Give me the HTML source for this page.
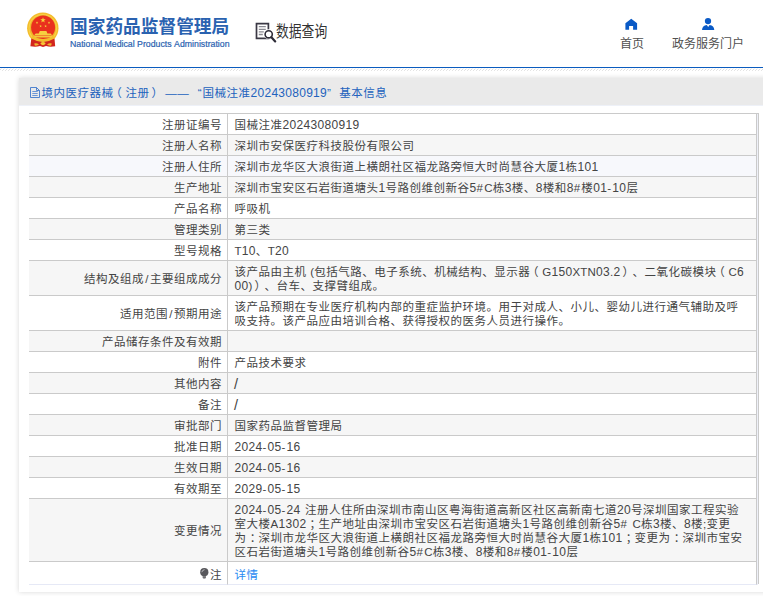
<!DOCTYPE html>
<html lang="zh-CN">
<head>
<meta charset="utf-8">
<title>国家药品监督管理局 数据查询</title>
<style>
*{box-sizing:border-box;margin:0;padding:0}
html,body{width:763px;height:596px;overflow:hidden;background:#fff}
body{font-family:"Liberation Sans","Noto Sans CJK SC",sans-serif;font-size:12px;text-spacing-trim:space-all;font-kerning:none;color:#333;position:relative}
.hdr{position:absolute;left:0;top:0;width:763px;height:66px;background:#fff}
.bline{position:absolute;left:0;top:67px;width:763px;height:1px;background:#0b5cbf}
.hatch{position:absolute;left:0;top:68px;width:763px;height:3px;background:repeating-linear-gradient(90deg,#fff 0,#fff 1px,#f4f4f4 1px,#f4f4f4 2px,#fff 2px,#fff 3px) 0 0/100% 1px no-repeat,repeating-linear-gradient(90deg,#e0e0e0 0,#e0e0e0 1px,#fff 1px,#fff 3px) 0 1px/100% 1px no-repeat,repeating-linear-gradient(90deg,#fff 0,#fff 2px,#e4e4e4 2px,#e4e4e4 3px) 0 2px/100% 1px no-repeat}
.emblem{position:absolute;left:22px;top:8px;width:42px;height:44px}
.t1{position:absolute;left:70px;top:15px;font-size:17.7px;font-weight:bold;color:#2a62b0;line-height:24px;white-space:nowrap}
.t2{position:absolute;left:70px;top:38px;-webkit-text-stroke:.2px #2a62b0;font-size:8.75px;color:#2a62b0;line-height:12px;white-space:nowrap}
.q{position:absolute;left:276px;top:21px;font-size:16px;line-height:22px;color:#333;white-space:nowrap;transform:scaleX(.8);transform-origin:0 0}
.qi{position:absolute;left:252px;top:18px;width:28px;height:28px}
.nav{position:absolute;top:35px;font-size:12px;line-height:18px;color:#505050;white-space:nowrap}
.ni{position:absolute}
.panel{position:absolute;left:19px;top:78px;width:760px;height:514px;background:#fff;box-shadow:0 0 5px rgba(0,0,0,.16)}
.ph{position:absolute;left:0;top:0;width:100%;height:28px;background:#eaeaea;border-bottom:1px solid #eef1f8;color:#2262bd;font-size:11.5px;letter-spacing:.5px;line-height:14px;padding:8px 0 0 22.5px;white-space:nowrap}
.ph svg{position:absolute;left:11px;top:9px;width:10px;height:11px}
.a{letter-spacing:.2px}
.d{font-size:12px;letter-spacing:.33px}
.h{letter-spacing:1.2px}
.e2{font-size:12px;letter-spacing:.28px}
.ql{margin:0 .4px 0 8.6px}
.qr{margin:0 7.9px 0 0}
.pl{position:relative;left:-3.3px}
.pr{position:relative;left:2px}
.pc{position:relative;left:3.2px}
.sl{padding:0 1.1px}
.bs{font-size:14.5px;line-height:10px;position:relative;top:.5px;left:-.5px}
.fw{font-family:"Noto Sans CJK SC",sans-serif}
table{position:absolute;left:10px;top:35px;width:728px;border-collapse:separate;border-spacing:0;border-top:1px solid #cacaca;table-layout:fixed}
.rb{position:absolute;left:739px;top:35px;width:1px;height:471px;background:#cacaca}
.rt{position:absolute;left:738px;top:35px;width:2px;height:1px;background:#cacaca}
.rg{position:absolute;left:738px;top:36px;width:1px;height:471px;background:#eef0f8}
td{border-bottom:1px solid #cacaca;border-right:1px solid #cacaca;font-size:11.5px;letter-spacing:.5px;line-height:14px;height:21px;padding:4px 8px 2px 6.5px;vertical-align:middle;color:#444;word-break:break-all}
td.l{width:199px;text-align:right;padding:4px 5px 2px 2px}
td.l2{padding-top:3px}
tr.g td{background:#f6f6f6}
tr.hv td{background:#f7f8fc}
a{color:#2b8cf2;text-decoration:none}
tr.last td{height:23px;border-bottom-color:#e6e9f6;padding-top:6px;padding-bottom:2px}
.bulb{display:inline-block;width:9px;height:11px;vertical-align:-.3px;margin-right:1.500px}
</style>
</head>
<body>
<div class="hdr">
<svg class="emblem" viewBox="22 8 42 44">
<circle cx="42.800" cy="28.200" r="15.700" fill="#f4bd2c"/>
<circle cx="42.800" cy="28.200" r="14.200" fill="#f7d24a"/>
<circle cx="42.800" cy="28.200" r="13.200" fill="#f1b62a"/>
<circle cx="43.100" cy="27.600" r="12" fill="#e9301e"/>
<polygon points="43.00,17.30 43.68,19.26 45.76,19.30 44.10,20.56 44.70,22.55 43.00,21.36 41.30,22.55 41.90,20.56 40.24,19.30 42.32,19.26" fill="#f8d63c"/><polygon points="37.00,21.30 37.33,22.25 38.33,22.27 37.53,22.87 37.82,23.83 37.00,23.26 36.18,23.83 36.47,22.87 35.67,22.27 36.67,22.25" fill="#f8d63c"/><polygon points="49.00,21.30 49.33,22.25 50.33,22.27 49.53,22.87 49.82,23.83 49.00,23.26 48.18,23.83 48.47,22.87 47.67,22.27 48.67,22.25" fill="#f8d63c"/><polygon points="40.60,24.70 40.93,25.65 41.93,25.67 41.13,26.27 41.42,27.23 40.60,26.66 39.78,27.23 40.07,26.27 39.27,25.67 40.27,25.65" fill="#f8d63c"/><polygon points="45.60,24.70 45.93,25.65 46.93,25.67 46.13,26.27 46.42,27.23 45.60,26.66 44.78,27.23 45.07,26.27 44.27,25.67 45.27,25.65" fill="#f8d63c"/>
<path d="M38.800 33.400L39.800 31h6.600l1 2.400h3.200l1.500 1.800v2.200H34.200v-2.200l1.500-1.800z" fill="#f6cf40"/>
<path d="M32.200 36.200Q43 41.800 54 36.200L54.600 38.400Q43 44.600 31.600 38.400Z" fill="#f3bd2c"/>
<path d="M31.300 38.600Q43 45.400 54.500 38.600L55.200 46.200Q50 47.300 46 45.900L43 46.900L40 45.900Q36 47.300 30.400 46.200Z" fill="#d2261c"/>
<path d="M40.300 43.200Q43 40.800 45.700 43.200Q44.600 45.300 43 45.300Q41.400 45.300 40.300 43.200Z" fill="#f5c535"/>
<path d="M34.200 43.600Q36.500 42.600 39 44.600Q37 46.200 34.800 45.600ZM51.800 43.600Q49.500 42.600 47 44.600Q49 46.200 51.200 45.600Z" fill="#f0b830"/>
<path d="M34.400 35.600h17.300" stroke="#e9301e" stroke-width=".5"/>
</svg>
<div class="t1">国家药品监督管理局</div>
<div class="t2">National Medical Products Administration</div>
<svg class="qi" viewBox="252 18 28 28"><path d="M256.500 23.600H268.400V38.300H256.500Z" fill="none" stroke="#3a3844" stroke-width="1.700"/><path d="M258.800 26.700h7M258.800 29.300h7M258.800 31.900h5M258.800 34.500h4" stroke="#8a8a92" stroke-width="1.300"/><circle cx="268.700" cy="34.300" r="5" fill="#fff"/><circle cx="268.700" cy="34.300" r="3.600" fill="#fff" stroke="#2e2c38" stroke-width="1.600"/><path d="M271.400 37.200l3.800 4.200" stroke="#2e2c38" stroke-width="2.200" stroke-linecap="round"/></svg>
<div class="q">数据查询</div>
<svg class="ni" style="left:619px;top:14px;width:24px;height:20px" viewBox="619 14 24 20"><path d="M625.400 23.200L631.250 18.800L637.100 23.200V29.800H633.100V25.900H629.100V29.800H625.400Z" fill="#0a5ac6"/></svg>
<div class="nav" style="left:620px">首页</div>
<svg class="ni" style="left:696px;top:14px;width:24px;height:20px" viewBox="696 14 24 20"><circle cx="708" cy="21.100" r="3.150" fill="#0a5ac6"/><path d="M702 30.100Q702.300 25.300 706.800 24.900L708.200 26.900L709.600 24.900Q714 25.300 714.300 30.100Z" fill="#0a5ac6"/></svg>
<div class="nav" style="left:672px">政务服务门户</div>
</div>
<div class="bline"></div>
<div class="hatch"></div>
<div class="panel">
<div class="ph"><svg viewBox="0 0 10 11"><path d="M.5.5h6l3 3v7h-9z" fill="none" stroke="#3f78cc" stroke-width=".9"/><path d="M6.500.500v3h3" fill="none" stroke="#3f78cc" stroke-width=".9"/><path d="M2.300 4.500h5.400M2.300 6.500h5.400M2.300 8.500h5.400" stroke="#5c8cd4" stroke-width=".9"/></svg>境内医疗器械<span class="pl">（</span>注册<span class="pr">）</span> ——<span class="ql">“</span>国械注准<span class="e2">20243080919</span><span class="qr">”</span>基本信息</div>
<table cellspacing="0">
<tr><td class="l">注册证编号</td><td>国械注准<span class="d">20243080919</span></td></tr>
<tr class="g"><td class="l">注册人名称</td><td>深圳市安保医疗科技股份有限公司</td></tr>
<tr class="hv"><td class="l">注册人住所</td><td>深圳市龙华区大浪街道上横朗社区福龙路旁恒大时尚慧谷大厦<span class="d">1</span>栋<span class="d">101</span></td></tr>
<tr class="g"><td class="l">生产地址</td><td>深圳市宝安区石岩街道塘头<span class="d">1</span>号路创维创新谷<span class="d">5</span><span class="h">#</span><span class="a">C</span>栋<span class="d">3</span>楼、<span class="d">8</span>楼和<span class="d">8</span><span class="h">#</span>楼<span class="d">01</span><span class="h">-</span><span class="d">10</span>层</td></tr>
<tr><td class="l">产品名称</td><td>呼吸机</td></tr>
<tr class="g"><td class="l">管理类别</td><td>第三类</td></tr>
<tr><td class="l">型号规格</td><td><span class="a">T</span><span class="d">10</span>、<span class="a">T</span><span class="d">20</span></td></tr>
<tr class="g"><td class="l l2">结构及组成<span class="sl">/</span>主要组成成分</td><td class="m">该产品由主机 <span class="a">(</span>包括气路、电子系统、机械结构、显示器<span class="pl">（</span><span class="a">G</span><span class="d">150</span><span class="a">XTN</span><span class="d">03</span><span class="a">.</span><span class="d">2</span><span class="pr">）</span>、二氧化碳模块<span class="pl">（</span><span class="a">C</span><span class="d">600</span><span class="a">)</span><span class="pr">）</span>、台车、支撑臂组成。</td></tr>
<tr><td class="l l2">适用范围<span class="sl">/</span>预期用途</td><td class="m">该产品预期在专业医疗机构内部的重症监护环境。用于对成人、小儿、婴幼儿进行通气辅助及呼吸支持。该产品应由培训合格、获得授权的医务人员进行操作。</td></tr>
<tr class="g"><td class="l">产品储存条件及有效期</td><td></td></tr>
<tr><td class="l">附件</td><td>产品技术要求</td></tr>
<tr class="g"><td class="l">其他内容</td><td><span class="bs">/</span></td></tr>
<tr><td class="l">备注</td><td><span class="bs">/</span></td></tr>
<tr class="g"><td class="l">审批部门</td><td>国家药品监督管理局</td></tr>
<tr><td class="l">批准日期</td><td><span class="d">2024</span><span class="h">-</span><span class="d">05</span><span class="h">-</span><span class="d">16</span></td></tr>
<tr class="g"><td class="l">生效日期</td><td><span class="d">2024</span><span class="h">-</span><span class="d">05</span><span class="h">-</span><span class="d">16</span></td></tr>
<tr><td class="l">有效期至</td><td><span class="d">2029</span><span class="h">-</span><span class="d">05</span><span class="h">-</span><span class="d">15</span></td></tr>
<tr class="g"><td class="l l2">变更情况</td><td class="m"><span class="d">2024</span><span class="h">-</span><span class="d">05</span><span class="h">-</span><span class="d">24</span><span class="h"> </span>注册人住所由深圳市南山区粤海街道高新区社区高新南七道<span class="d">20</span>号深圳国家工程实验室大楼<span class="a">A</span><span class="d">1302</span><span class="pc">；</span>生产地址由深圳市宝安区石岩街道塘头<span class="d">1</span>号路创维创新谷<span class="d">5</span><span class="h">#</span><span class="h"> </span><span class="a">C</span>栋<span class="d">3</span>楼、<span class="d">8</span>楼<span class="a">;</span>变更为<span class="pc">：</span>深圳市龙华区大浪街道上横朗社区福龙路旁恒大时尚慧谷大厦<span class="d">1</span>栋<span class="d">101</span><span class="pc">；</span>变更为<span class="pc">：</span>深圳市宝安区石岩街道塘头<span class="d">1</span>号路创维创新谷<span class="d">5</span><span class="h">#</span><span class="a">C</span>栋<span class="d">3</span>楼、<span class="d">8</span>楼和<span class="d">8</span><span class="h">#</span>楼<span class="d">01</span><span class="h">-</span><span class="d">10</span>层</td></tr>
<tr class="last"><td class="l"><svg class="bulb" viewBox="0 0 9 11"><circle cx="4.300" cy="4.200" r="4.100" fill="#58585c"/><path d="M2.700 7.600h3.200v2.300q-1.600 1.100-3.200 0z" fill="#58585c"/><path d="M2.700 8.900h3.200" stroke="#d8d8d8" stroke-width=".5"/><path d="M1.900 3.800Q2.300 1.900 4.200 1.700" fill="none" stroke="#c4c4c8" stroke-width=".9" stroke-linecap="round"/></svg>注</td><td><a>详情</a></td></tr>
</table>
<div class="rg"></div><div class="rb"></div><div class="rt"></div>
</div>
</body>
</html>
